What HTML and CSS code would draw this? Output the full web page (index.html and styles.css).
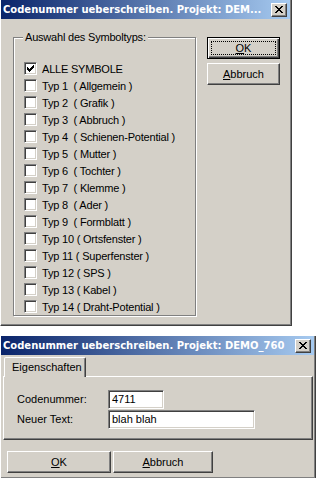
FILE: index.html
```html
<!DOCTYPE html>
<html>
<head>
<meta charset="utf-8">
<title>Codenummer</title>
<link rel="stylesheet" href="styles.css">
</head>
<body>
<div class="win win1">
  <div class="titlebar">
    <span class="title">Codenummer ueberschreiben. Projekt: DEM...</span>
    <span class="closebtn"><svg width="8" height="7" viewBox="0 0 8 7" shape-rendering="crispEdges"><path fill="#000" d="M0 0h2v1h-2zM6 0h2v1h-2zM1 1h2v1h-2zM5 1h2v1h-2zM2 2h4v1h-4zM3 3h2v1h-2zM2 4h4v1h-4zM1 5h2v1h-2zM5 5h2v1h-2zM0 6h2v1h-2zM6 6h2v1h-2z"/></svg></span>
  </div>
  <div class="body1">
    <div class="group">
      <span class="legend">Auswahl des Symboltyps:</span>
      <div class="rows">
        <div class="row"><span class="cb"><svg width="7" height="7" viewBox="0 0 7 7" shape-rendering="crispEdges"><path fill="#000" d="M0 2H1V3H2V4H3V3H4V2H5V1H6V0H7V3H6V4H5V5H4V6H3V7H2V6H1V5H0Z"/></svg></span><span class="lbl">ALLE SYMBOLE</span></div>
        <div class="row"><span class="cb"></span><span class="lbl">Typ 1  ( Allgemein )</span></div>
        <div class="row"><span class="cb"></span><span class="lbl">Typ 2  ( Grafik )</span></div>
        <div class="row"><span class="cb"></span><span class="lbl">Typ 3  ( Abbruch )</span></div>
        <div class="row"><span class="cb"></span><span class="lbl">Typ 4  ( Schienen-Potential )</span></div>
        <div class="row"><span class="cb"></span><span class="lbl">Typ 5  ( Mutter )</span></div>
        <div class="row"><span class="cb"></span><span class="lbl">Typ 6  ( Tochter )</span></div>
        <div class="row"><span class="cb"></span><span class="lbl">Typ 7  ( Klemme )</span></div>
        <div class="row"><span class="cb"></span><span class="lbl">Typ 8  ( Ader )</span></div>
        <div class="row"><span class="cb"></span><span class="lbl">Typ 9  ( Formblatt )</span></div>
        <div class="row"><span class="cb"></span><span class="lbl">Typ 10 ( Ortsfenster )</span></div>
        <div class="row"><span class="cb"></span><span class="lbl">Typ 11 ( Superfenster )</span></div>
        <div class="row"><span class="cb"></span><span class="lbl">Typ 12 ( SPS )</span></div>
        <div class="row"><span class="cb"></span><span class="lbl">Typ 13 ( Kabel )</span></div>
        <div class="row"><span class="cb"></span><span class="lbl">Typ 14 ( Draht-Potential )</span></div>
      </div>
    </div>
    <div class="btncol">
      <div class="btn default"><span><u>O</u>K</span></div>
      <div class="btn"><span><u>A</u>bbruch</span></div>
    </div>
  </div>
</div>

<div class="win win2">
  <div class="titlebar">
    <span class="title">Codenummer ueberschreiben. Projekt: DEMO_760</span>
    <span class="closebtn"><svg width="8" height="7" viewBox="0 0 8 7" shape-rendering="crispEdges"><path fill="#000" d="M0 0h2v1h-2zM6 0h2v1h-2zM1 1h2v1h-2zM5 1h2v1h-2zM2 2h4v1h-4zM3 3h2v1h-2zM2 4h4v1h-4zM1 5h2v1h-2zM5 5h2v1h-2zM0 6h2v1h-2zM6 6h2v1h-2z"/></svg></span>
  </div>
  <div class="tabs"><div class="tab">Eigenschaften</div></div>
  <div class="panel">
    <div class="frow"><span class="flabel">Codenummer:</span><span class="input input1">4711</span></div>
    <div class="frow"><span class="flabel">Neuer Text:</span><span class="input input2">blah blah</span></div>
  </div>
  <div class="btnrow">
    <div class="btn btn-ok"><span><u>O</u>K</span></div>
    <div class="btn btn-cancel"><span><u>A</u>bbruch</span></div>
  </div>
</div>
</body>
</html>
```

FILE: styles.css
```css
html, body {
  margin: 0;
  padding: 0;
}
body {
  background: #fff;
  font-family: "Liberation Sans", Arial, sans-serif;
  font-size: 11px;
  color: #000;
  width: 316px;
  height: 478px;
  overflow: hidden;
}

.win {
  background: #d4d0c8;
  box-sizing: border-box;
  border-left: 1px solid #fff;
  border-right: 1px solid #404040;
  padding-right: 1px;
  box-shadow: inset -1px -1px #808080;
  display: flex;
  flex-direction: column;
}
.win1 {
  width: 292px;
  height: 326px;
  border-bottom: 1px solid #404040;
  padding-bottom: 1px;
}
.win2 {
  width: 316px;
  height: 142px;
  margin-top: 10px;
}

.titlebar {
  flex: none;
  height: 19px;
  background: linear-gradient(to right, #0a246a, #a6caf0);
  display: flex;
  align-items: center;
  padding: 0 3px 0 2px;
}
.title {
  flex: 1;
  color: #fff;
  font: bold 10px/15px "DejaVu Sans", sans-serif;
  white-space: nowrap;
  overflow: hidden;
}
.closebtn {
  flex: none;
  width: 16px;
  height: 14px;
  box-sizing: border-box;
  background: #d4d0c8;
  border: 1px solid;
  border-color: #fff #404040 #404040 #fff;
  box-shadow: inset -1px -1px #808080;
  display: flex;
  align-items: center;
  justify-content: center;
  padding-right: 1px;
}
.closebtn svg { display: block; }

.body1 {
  display: flex;
  align-items: flex-start;
  padding: 18px 0 0 12px;
}
.group {
  position: relative;
  width: 183px;
  height: 279px;
  box-sizing: border-box;
  border: 1px solid #808080;
  box-shadow: inset 1px 1px #fff, 1px 1px #fff;
  padding: 22px 0 0 10px;
}
.legend {
  position: absolute;
  top: -8px;
  left: 9px;
  padding: 0 2px;
  background: #d4d0c8;
  line-height: 14px;
  letter-spacing: -0.2px;
}
.rows {
  display: flex;
  flex-direction: column;
}
.row {
  height: 17px;
  display: flex;
  align-items: center;
  gap: 5px;
  white-space: pre;
  letter-spacing: -0.2px;
}
.cb {
  flex: none;
  width: 13px;
  height: 13px;
  box-sizing: border-box;
  border: 1px solid;
  border-color: #808080 #fff #fff #808080;
  box-shadow: inset 1px 1px #404040, inset -1px -1px #d4d0c8;
  background: #fff;
  display: flex;
  align-items: center;
  justify-content: center;
}
.cb svg { display: block; }

.btncol {
  margin-left: 11px;
  display: flex;
  flex-direction: column;
  gap: 4px;
}
.btn {
  position: relative;
  width: 73px;
  height: 22px;
  box-sizing: border-box;
  border: 1px solid;
  border-color: #fff #404040 #404040 #fff;
  box-shadow: inset -1px -1px #808080;
  display: flex;
  align-items: center;
  justify-content: center;
}
.btn.default {
  border-color: #000;
  box-shadow: inset 1px 1px #fff, inset -1px -1px #404040, inset -2px -2px #808080;
}
.btn.default::after {
  content: "";
  position: absolute;
  left: 3px;
  top: 3px;
  right: 3px;
  bottom: 3px;
  border: 1px dotted #000;
}

.tabs {
  display: flex;
  margin: 2px 0 0 3px;
  position: relative;
  z-index: 1;
}
.tab {
  width: 82px;
  height: 20px;
  box-sizing: border-box;
  margin-bottom: -1px;
  padding: 0 0 1px 7px;
  background: #d4d0c8;
  border: 1px solid;
  border-bottom: none;
  border-color: #fff #404040 transparent #fff;
  border-radius: 2px 2px 0 0;
  box-shadow: inset -1px 0 #808080;
  display: flex;
  align-items: center;
}
.panel {
  margin-left: 2px;
  width: 310px;
  height: 64px;
  box-sizing: border-box;
  border: 1px solid;
  border-color: #fff #404040 #404040 #fff;
  box-shadow: inset -1px -1px #808080;
  padding: 12px 0 0 13px;
}
.frow {
  display: flex;
  align-items: center;
  height: 20px;
}
.flabel {
  width: 91px;
  flex: none;
}
.input {
  height: 19px;
  box-sizing: border-box;
  border: 1px solid;
  border-color: #808080 #fff #fff #808080;
  box-shadow: inset 1px 1px #404040, inset -1px -1px #d4d0c8;
  background: #fff;
  padding: 0 3px;
  display: flex;
  align-items: center;
}
.input1 { width: 56px; }
.input2 { width: 147px; }

.btnrow {
  display: flex;
  gap: 2px;
  margin: 11px 0 0 6px;
}
.btn-ok { width: 104px; }
.btn-cancel { width: 100px; }
```
